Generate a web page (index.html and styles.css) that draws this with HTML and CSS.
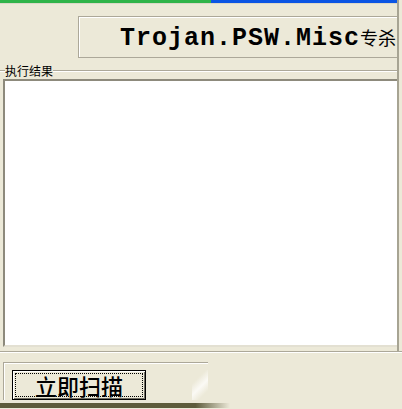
FILE: index.html
```html
<!DOCTYPE html>
<html lang="zh-CN">
<head>
    <meta charset="UTF-8">
    <title>Trojan.PSW.Misc专杀</title>
    <link rel="stylesheet" href="styles.css">
</head>
<body>
    <div class="window">
        <div class="upper">
            <div class="progress"><div class="progress-done"></div></div>
            <div class="title-row">
                <div class="title-box">Trojan.PSW.Misc<span class="title-cn">专杀</span></div>
            </div>
            <div class="group-head"><span class="group-label">执行结果</span></div>
            <div class="result"></div>
        </div>
        <div class="sep"></div>
        <div class="button-frame">
            <button class="scan-btn"><span class="focus">立即扫描</span></button>
            <div class="glitch"></div>
        </div>
        <div class="shadow"></div>
    </div>
</body>
</html>
```

FILE: styles.css
```css
body {
    margin: 0;
    padding: 0;
    background-color: #ece9d8;
    font-family: "Noto Sans CJK SC", sans-serif;
    overflow: hidden;
}

.window {
    width: 402px;
    height: 409px;
    overflow: hidden;
}

.upper {
    width: 397px;
    padding-bottom: 4px;
    border-right: 2px solid #a7a493;
}

.progress {
    height: 3px;
    background-color: #0b55e4;
    border-bottom: 1px solid #dcd8c8;
}

.progress-done {
    width: 211px;
    height: 3px;
    background-color: #2fb449;
}

.title-row {
    padding-top: 12px;
}

.title-box {
    margin-left: 78px;
    height: 40px;
    border: 1px solid #aca899;
    border-right: none;
    box-shadow: inset 1px 1px #fff;
    padding-left: 41px;
    font-family: "Liberation Mono", monospace;
    font-weight: bold;
    font-size: 25px;
    letter-spacing: 1px;
    line-height: 40px;
    color: #000;
    white-space: nowrap;
    overflow: hidden;
}

.title-cn {
    font-family: "Noto Sans CJK SC", sans-serif;
    font-weight: normal;
    font-size: 18px;
    letter-spacing: 0;
}

.group-head {
    display: flex;
    align-items: center;
    height: 14px;
    margin-top: 6px;
    margin-bottom: 1px;
}

.group-head::before,
.group-head::after {
    content: "";
    height: 0;
    border-top: 1px solid #aca899;
    border-bottom: 1px solid #fff;
}

.group-head::before {
    width: 5px;
}

.group-head::after {
    flex: 1;
}

.group-label {
    font-size: 12px;
    line-height: 14px;
    color: #000;
}

.result {
    margin-left: 3px;
    height: 264px;
    background-color: #fff;
    border-top: 2px solid #8d8a7c;
    border-left: 2px solid #8d8a7c;
    border-bottom: 2px solid #e3e0d2;
}

.sep {
    height: 0;
    border-top: 1px solid #aca899;
    border-bottom: 1px solid #fff;
}

.button-frame {
    width: 196px;
    height: 30px;
    margin-top: 9px;
    margin-left: 3px;
    padding: 7px 0 0 8px;
    border-top: 1px solid #aca899;
    border-left: 1px solid #aca899;
    box-shadow: inset 1px 1px #fff;
    display: flex;
    align-items: flex-start;
}

.scan-btn {
    width: 148px;
    height: 30px;
    padding: 2px;
    margin: 0;
    border: 1px solid #000;
    background-color: #ece9d8;
    box-shadow: inset 1px 1px #fff, inset -1px -1px #716f64;
    font-family: "Noto Sans CJK SC", sans-serif;
    font-size: 22px;
    font-weight: 500;
    color: #000;
    cursor: pointer;
}

.focus {
    display: block;
    height: 22px;
    line-height: 22px;
    border: 1px dotted #000;
}

.glitch {
    width: 18px;
    height: 30px;
    margin-left: 46px;
    background: linear-gradient(135deg, #ece9d8 30%, #fbfaf5 55%, #ece9d8 80%);
}

.shadow {
    height: 5px;
    width: 230px;
    margin-top: 3px;
    background: linear-gradient(to right, #5e5c3c 85%, #ece9d8);
}
```
